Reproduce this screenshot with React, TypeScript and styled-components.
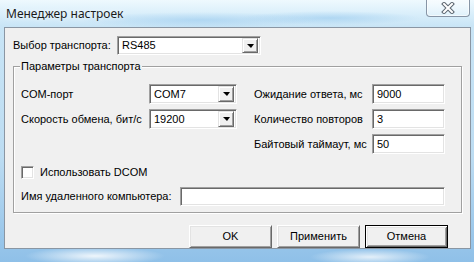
import React from "react";
import styled, { createGlobalStyle } from "styled-components";

const Global = createGlobalStyle`
  html, body { margin: 0; padding: 0; background: #cfe6f7; }
  body { width: 474px; height: 262px; overflow: hidden; }
`;

const Window = styled.div`
  width: 474px;
  height: 262px;
  box-sizing: border-box;
  display: flex;
  flex-direction: column;
  padding: 0 3px 13px 4px;
  background:
    radial-gradient(ellipse 70px 9px at 95px 256px, rgba(255, 255, 255, 0.85), rgba(255, 255, 255, 0) 100%),
    radial-gradient(ellipse 60px 8px at 370px 257px, rgba(255, 255, 255, 0.75), rgba(255, 255, 255, 0) 100%),
    radial-gradient(ellipse 120px 8px at 200px 20px, rgba(150, 200, 238, 0.55), rgba(150, 200, 238, 0) 100%),
    radial-gradient(ellipse 90px 7px at 330px 18px, rgba(140, 195, 236, 0.5), rgba(140, 195, 236, 0) 100%),
    linear-gradient(180deg, #eef9fe 0px, #dcf0fb 12px, #c9e5f6 26px, #bcdcf2 60%, #8fc0e8 100%);
  font-family: "Liberation Sans", Arial, sans-serif;
  font-size: 11px;
  color: #000;
`;

const TitleBar = styled.div`
  height: 27px;
  display: flex;
  align-items: center;
  padding-left: 2px;
`;

const TitleText = styled.span`
  font-family: "Noto Sans", "Open Sans", sans-serif;
  font-size: 12px;
  color: #1a1a1a;
  text-shadow: 0 0 6px rgba(255, 255, 255, 0.9);
  margin-top: -1px;
`;

const CloseButton = styled.div`
  margin-left: auto;
  margin-right: 1px;
  align-self: flex-start;
  margin-top: -1px;
  width: 44px;
  height: 18px;
  box-sizing: border-box;
  border: 1px solid #8795a6;
  border-top: none;
  border-radius: 0 0 4px 4px;
  background: linear-gradient(180deg, rgba(255, 255, 255, 0.55), rgba(255, 255, 255, 0.2));
  box-shadow: inset 0 0 0 1px rgba(255, 255, 255, 0.6);
  display: flex;
  align-items: center;
  justify-content: center;
`;

const Client = styled.div`
  flex: 1;
  border: 1px solid #8a96a3;
  background: #f0f0f0;
  padding: 8px 8px 0 8px;
  display: flex;
  flex-direction: column;
`;

const Row = styled.div<{ $mt?: number }>`
  display: flex;
  align-items: center;
  margin-top: ${(p) => p.$mt ?? 0}px;
`;

const Label = styled.span<{ $w?: number }>`
  display: inline-block;
  width: ${(p) => (p.$w ? `${p.$w}px` : "auto")};
  white-space: nowrap;
  line-height: 13px;
`;

const Sunken = styled.div<{ $w: number; $h: number }>`
  width: ${(p) => p.$w}px;
  height: ${(p) => p.$h}px;
  box-sizing: border-box;
  background: #fff;
  border: 1px solid;
  border-color: #a0a0a0 #ffffff #ffffff #a0a0a0;
  box-shadow: inset 1px 1px 0 #696969, inset -1px -1px 0 #e3e3e3;
  display: flex;
  align-items: center;
  padding: 1px 1px 1px 4px;
  line-height: 13px;
`;

const FieldText = styled.span`
  flex: 1;
  white-space: nowrap;
`;

const DropButton = styled.div`
  width: 16px;
  align-self: stretch;
  box-sizing: border-box;
  background: #f0f0f0;
  border: 1px solid;
  border-color: #e3e3e3 #696969 #696969 #e3e3e3;
  box-shadow: inset 1px 1px 0 #ffffff, inset -1px -1px 0 #a0a0a0;
  display: flex;
  align-items: center;
  justify-content: center;
`;

const Arrow = styled.div`
  width: 0;
  height: 0;
  border-left: 4px solid transparent;
  border-right: 3px solid transparent;
  border-top: 4px solid #000;
  margin-left: 1px;
`;

const GroupBox = styled.div`
  position: relative;
  margin-top: 11px;
  height: 147px;
  box-sizing: border-box;
  border: 1px solid #a0a0a0;
  box-shadow: inset 1px 1px 0 #ffffff, 1px 1px 0 #ffffff;
  padding: 17px 0 0 7px;
  display: flex;
  flex-direction: column;
`;

const Caption = styled.span`
  position: absolute;
  top: -7px;
  left: 6px;
  padding: 0 1px;
  background: #f0f0f0;
  line-height: 13px;
`;

const ParamGrid = styled.div`
  display: grid;
  grid-template-columns: 128px 105px 118px 73px;
  row-gap: 5px;
  grid-auto-rows: 20px;
  align-items: center;
  justify-items: start;
`;

const CheckRow = styled.label`
  display: flex;
  align-items: center;
  gap: 6px;
  margin-top: 12px;
  height: 13px;
`;

const CheckBox = styled.span`
  width: 13px;
  height: 13px;
  box-sizing: border-box;
  background: #fff;
  border: 1px solid;
  border-color: #a0a0a0 #ffffff #ffffff #a0a0a0;
  box-shadow: inset 1px 1px 0 #696969, inset -1px -1px 0 #e3e3e3;
`;

const ButtonRow = styled.div`
  display: flex;
  justify-content: flex-end;
  gap: 5px;
  margin-top: 12px;
  padding-right: 14px;
`;

const PushButton = styled.div<{ $default?: boolean }>`
  width: 83px;
  height: 23px;
  box-sizing: border-box;
  background: #f0f0f0;
  display: flex;
  align-items: center;
  justify-content: center;
  line-height: 13px;
  border: 1px solid;
  border-color: ${(p) => (p.$default ? "#000" : "#ffffff #696969 #696969 #ffffff")};
  box-shadow: ${(p) =>
    p.$default
      ? "inset 1px 1px 0 #ffffff, inset -1px -1px 0 #696969, inset 2px 2px 0 #e3e3e3, inset -2px -2px 0 #a0a0a0"
      : "inset 1px 1px 0 #e3e3e3, inset -1px -1px 0 #a0a0a0"};
`;

const Combo = ({ w, h, value }: { w: number; h: number; value: string }) => (
  <Sunken $w={w} $h={h} style={{ paddingRight: 2 }}>
    <FieldText>{value}</FieldText>
    <DropButton>
      <Arrow />
    </DropButton>
  </Sunken>
);

const Edit = ({ w, h, value }: { w: number; h: number; value: string }) => (
  <Sunken $w={w} $h={h}>
    <FieldText>{value}</FieldText>
  </Sunken>
);

export default function App() {
  return (
    <>
      <Global />
      <Window>
        <TitleBar>
          <TitleText>Менеджер настроек</TitleText>
          <CloseButton>
            <svg width="14" height="12" viewBox="0 0 14 12">
              <path d="M3 2 L11 10 M11 2 L3 10" stroke="#5c6670" strokeWidth="4" strokeLinecap="square" />
              <path d="M3 2 L11 10 M11 2 L3 10" stroke="#ffffff" strokeWidth="2" strokeLinecap="square" />
            </svg>
          </CloseButton>
        </TitleBar>
        <Client>
          <Row>
            <Label $w={104}>Выбор транспорта:</Label>
            <Combo w={144} h={19} value="RS485" />
          </Row>
          <GroupBox>
            <Caption>Параметры транспорта</Caption>
            <ParamGrid>
              <Label>COM-порт</Label>
              <Combo w={88} h={20} value="COM7" />
              <Label>Ожидание ответа, мс</Label>
              <Edit w={73} h={20} value="9000" />
              <Label>Скорость обмена, бит/с</Label>
              <Combo w={88} h={20} value="19200" />
              <Label>Количество повторов</Label>
              <Edit w={73} h={20} value="3" />
              <span />
              <span />
              <Label>Байтовый таймаут, мс</Label>
              <Edit w={73} h={20} value="50" />
            </ParamGrid>
            <CheckRow>
              <CheckBox />
              <Label>Использовать DCOM</Label>
            </CheckRow>
            <Row $mt={8}>
              <Label $w={159}>Имя удаленного компьютера:</Label>
              <Edit w={265} h={19} value="" />
            </Row>
          </GroupBox>
          <ButtonRow>
            <PushButton>OK</PushButton>
            <PushButton>Применить</PushButton>
            <PushButton $default>Отмена</PushButton>
          </ButtonRow>
        </Client>
      </Window>
    </>
  );
}
